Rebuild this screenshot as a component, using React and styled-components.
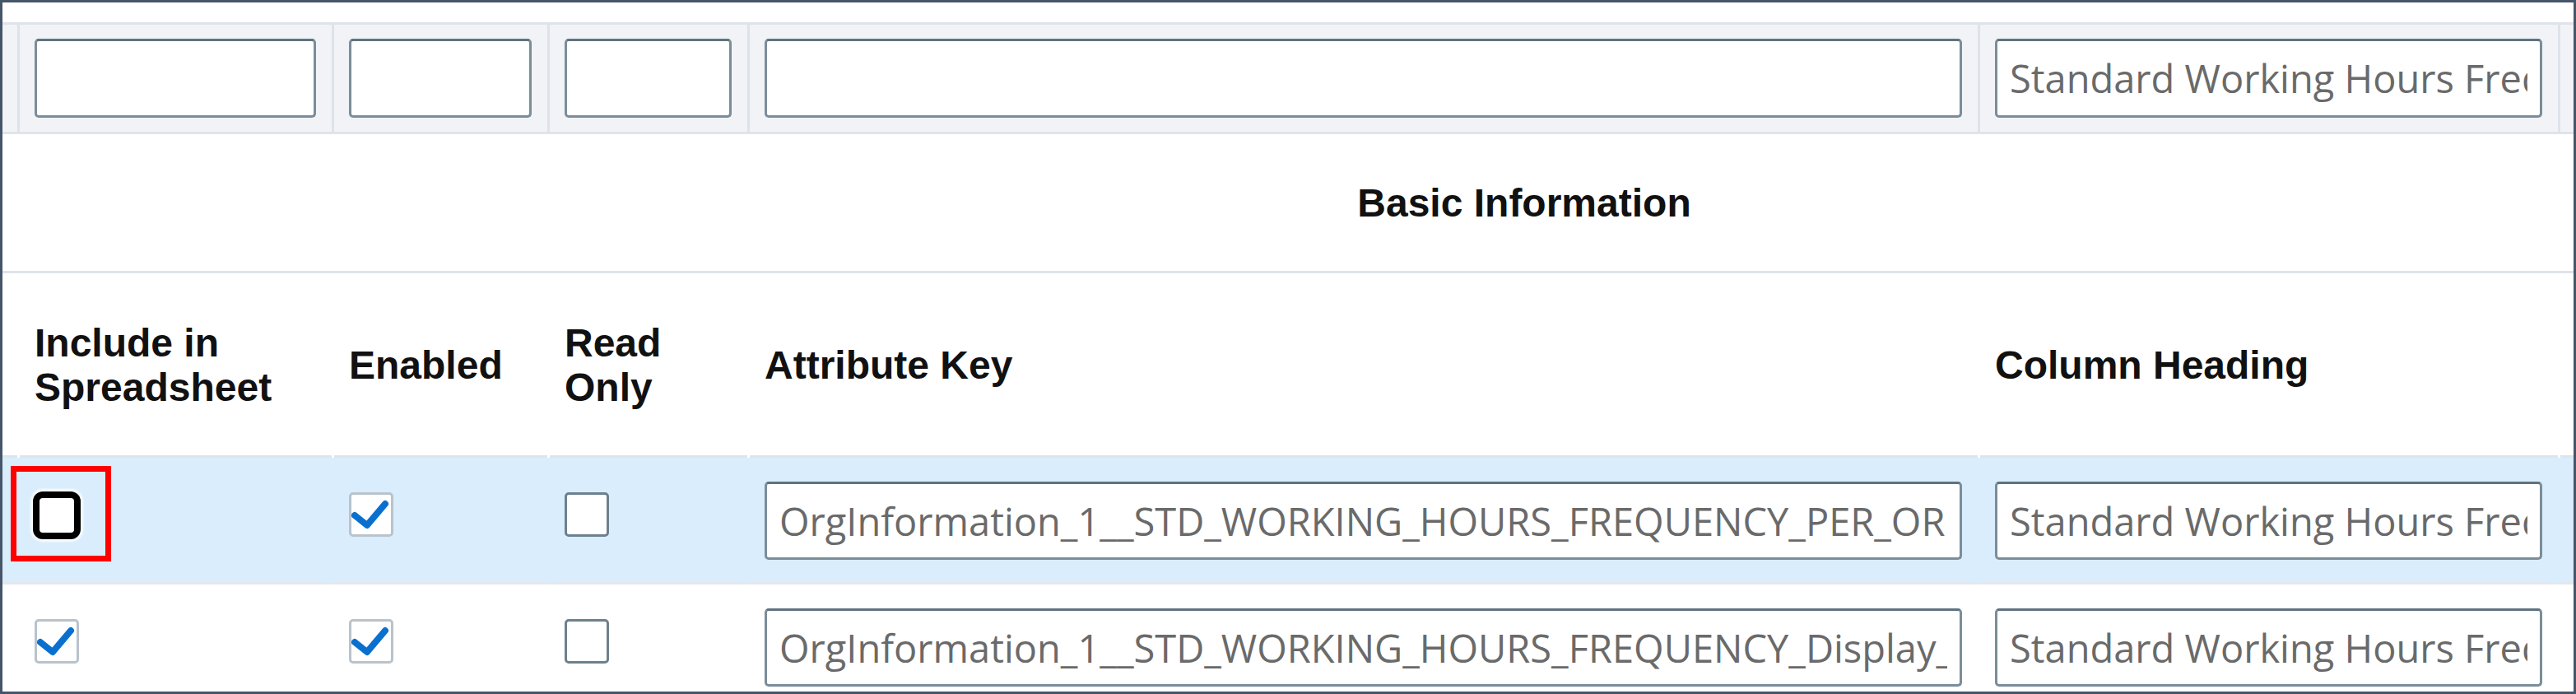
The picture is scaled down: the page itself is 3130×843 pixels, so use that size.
import React from 'react';
import styled, { createGlobalStyle } from 'styled-components';

const COLS = '18px 382px 262px 243px 1495px 705px 1fr';

const GlobalStyle = createGlobalStyle`
  html, body { margin: 0; padding: 0; background: #fff; }
  body { font-family: 'Liberation Sans', Arial, sans-serif; }
  * { box-sizing: border-box; }
`;

const Frame = styled.div`
  width: 3130px;
  height: 843px;
  border: 3px solid #465569;
  overflow: hidden;
  background: #fff;
  padding-top: 24px;
`;

const Row = styled.div`
  display: grid;
  grid-template-columns: ${COLS};
`;

const FilterRow = styled(Row)`
  height: 136px;
  background: #f1f3f7;
  border-top: 3px solid #dfe4ea;
  border-bottom: 3px solid #dfe4ea;
`;

const FilterCell = styled.div`
  display: flex;
  align-items: center;
  padding: 0 19px 0 18px;
  border-left: ${(p) => (p.$lead ? '0' : '3px solid #dde3ea')};
`;

const GroupRow = styled(Row)`
  height: 169px;
  border-bottom: 3px solid #dfe4ea;
`;

const GroupTitle = styled.div`
  grid-column: 5 / -1;
  display: flex;
  align-items: center;
  justify-content: center;
  padding-right: 331px;
  font-size: 48px;
  font-weight: 700;
  color: #111;
`;

const HeaderRow = styled(Row)`
  height: 224px;
`;

const HeaderCell = styled.div`
  display: flex;
  align-items: center;
  padding: 0 19px 0 18px;
  border-left: ${(p) => (p.$lead ? '0' : '3px solid #fff')};
  box-shadow: inset 0 -3px 0 #dfe4ea;
  font-size: 48px;
  line-height: 54px;
  font-weight: 700;
  color: #111;
`;

const DataRow = styled(Row)`
  height: 154px;
  background: ${(p) => (p.$active ? '#d9edfc' : '#fff')};
`;

const DataCell = styled.div`
  position: relative;
  display: flex;
  align-items: flex-start;
  padding: ${(p) => p.$top}px 19px 0 18px;
  border-left: ${(p) => (p.$lead ? '0' : '3px solid transparent')};
  box-shadow: inset 0 -3px 0 #e3e8ee;
`;

const Field = styled.input`
  width: 100%;
  height: ${(p) => p.$h}px;
  margin: 0;
  border: 3px solid #7b8d99;
  border-top-color: #5f727f;
  border-radius: 5px;
  background: #fff;
  padding: 0 15px;
  font-family: 'Open Sans', 'Noto Sans', sans-serif;
  font-size: 47px;
  color: #6a6a6a;
  outline: none;
`;

const Box = styled.div`
  width: 54px;
  height: 54px;
  flex: none;
  background: #fff;
  border: 3px solid ${(p) => (p.$checked ? '#b9c3cc' : '#6d808d')};
  border-radius: 5px;
  display: flex;
  align-items: center;
  justify-content: center;
`;

const FocusBox = styled(Box)`
  margin-top: 1px;
  border: 6px solid #000;
  border-radius: 10px;
  box-shadow: 0 0 0 2px #000, 0 0 3px 5px rgba(255, 255, 255, 0.9);
`;

const Callout = styled.div`
  position: absolute;
  left: -11px;
  top: 10px;
  width: 122px;
  height: 116px;
  border: 7px solid #ff0000;
`;

const Check = () => (
  <svg width="48" height="48" viewBox="0 0 48 48">
    <path
      d="M4 25 L19 37 L41 11"
      fill="none"
      stroke="#0a70d0"
      strokeWidth="8"
      strokeLinecap="round"
      strokeLinejoin="round"
    />
  </svg>
);

const Checkbox = ({ checked }) => (
  <Box $checked={checked}>{checked && <Check />}</Box>
);

const rows = [
  {
    active: true,
    include: null,
    enabled: true,
    readOnly: false,
    key: 'OrgInformation_1__STD_WORKING_HOURS_FREQUENCY_PER_ORG',
    heading: 'Standard Working Hours Frequency',
  },
  {
    active: false,
    include: true,
    enabled: true,
    readOnly: false,
    key: 'OrgInformation_1__STD_WORKING_HOURS_FREQUENCY_Display_Value',
    heading: 'Standard Working Hours Frequency',
  },
];

export default function App() {
  return (
    <>
      <GlobalStyle />
      <Frame>
        <FilterRow>
          <FilterCell $lead />
          <FilterCell><Field $h={96} readOnly value="" /></FilterCell>
          <FilterCell><Field $h={96} readOnly value="" /></FilterCell>
          <FilterCell><Field $h={96} readOnly value="" /></FilterCell>
          <FilterCell><Field $h={96} readOnly value="" /></FilterCell>
          <FilterCell>
            <Field $h={96} readOnly value="Standard Working Hours Frequency" />
          </FilterCell>
          <FilterCell />
        </FilterRow>

        <GroupRow>
          <GroupTitle>Basic Information</GroupTitle>
        </GroupRow>

        <HeaderRow>
          <HeaderCell $lead />
          <HeaderCell>Include in<br />Spreadsheet</HeaderCell>
          <HeaderCell>Enabled</HeaderCell>
          <HeaderCell>Read<br />Only</HeaderCell>
          <HeaderCell>Attribute Key</HeaderCell>
          <HeaderCell>Column Heading</HeaderCell>
          <HeaderCell />
        </HeaderRow>

        {rows.map((r, i) => (
          <DataRow key={i} $active={r.active}>
            <DataCell $lead $top={0} />
            <DataCell $top={42}>
              {r.include === null ? (
                <>
                  <FocusBox />
                  <Callout />
                </>
              ) : (
                <Checkbox checked={r.include} />
              )}
            </DataCell>
            <DataCell $top={42}><Checkbox checked={r.enabled} /></DataCell>
            <DataCell $top={42}><Checkbox checked={r.readOnly} /></DataCell>
            <DataCell $top={29}><Field $h={95} readOnly value={r.key} /></DataCell>
            <DataCell $top={29}><Field $h={95} readOnly value={r.heading} /></DataCell>
            <DataCell $top={0} />
          </DataRow>
        ))}
      </Frame>
    </>
  );
}
